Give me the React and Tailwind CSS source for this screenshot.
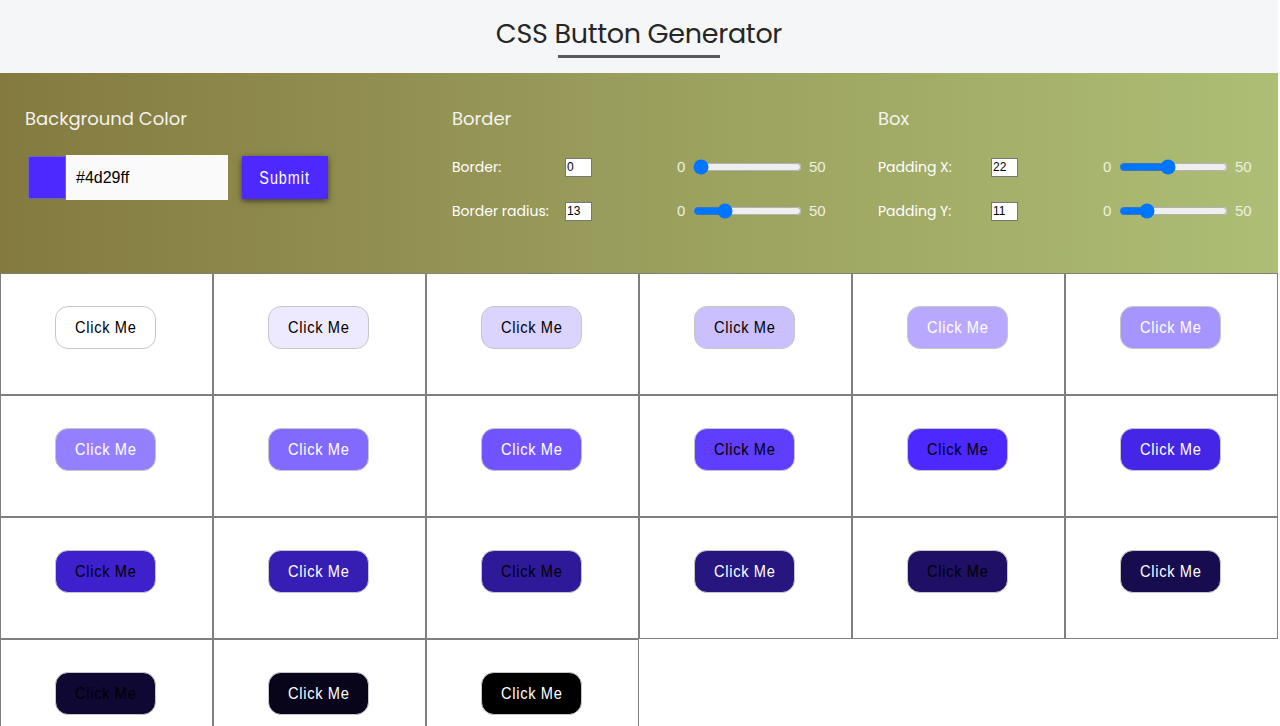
import { useState } from "react";

const colors = [
  ["#ffffff", "#000"], ["#edeaff", "#000"], ["#dbd4ff", "#000"], ["#cabfff", "#000"], ["#b8a9ff", "#fff"], ["#a694ff", "#fff"],
  ["#947fff", "#fff"], ["#8269ff", "#fff"], ["#7154ff", "#fff"], ["#5f3eff", "#000"], ["#4d29ff", "#000"], ["#4525e6", "#fff"],
  ["#3e21cc", "#000"], ["#361db3", "#fff"], ["#2e1999", "#000"], ["#271580", "#fff"], ["#1f1066", "#000"], ["#170c4d", "#fff"],
  ["#0f0833", "#000"], ["#08041a", "#fff"], ["#000000", "#fff"],
];

const poppins = { fontFamily: "Poppins, Inter, 'Noto Sans', sans-serif" };
const arial = { fontFamily: "'Liberation Sans', Arial, sans-serif" };

const SliderRow = ({ label, value, onChange }) => (
  <div className="flex items-center h-[44px] text-[14px] text-white">
    <span className="w-[113px]">{label}</span>
    <input
      type="text"
      value={value}
      onChange={(e) => onChange(Number(e.target.value) || 0)}
      className="w-[27px] h-[19px] bg-white text-black text-[12px] px-[1px] border border-[#777] outline-none"
      style={arial}
    />
    <span className="ml-[85px] w-[16px] text-[15px] text-[#eef0e0]" style={arial}>0</span>
    <input
      type="range"
      min="0"
      max="50"
      value={value}
      onChange={(e) => onChange(Number(e.target.value))}
      className="w-[109px] accent-[#0075ff]"
    />
    <span className="ml-[7px] text-[15px] text-[#eef0e0]" style={arial}>50</span>
  </div>
);

// condensed label: the original renders a narrow face, squeeze Arial to match
const Narrow = ({ children, width, squeeze = "scale-x-[0.8]" }) => (
  <span className="inline-flex justify-center whitespace-nowrap" style={{ width }}>
    <span className={`inline-block shrink-0 ${squeeze}`}>{children}</span>
  </span>
);

export default function App() {
  const [bg, setBg] = useState("#4d29ff");
  const [border, setBorder] = useState(0);
  const [radius, setRadius] = useState(13);
  const [padX, setPadX] = useState(22);
  const [padY, setPadY] = useState(11);

  return (
    <div className="w-[1280px] min-h-[726px] bg-white overflow-hidden">
      <div className="w-[1278px]">
        <header className="h-[73px] bg-[#f5f6f8] flex flex-col items-center pt-[15px]">
          <h1 className="text-[27px] leading-[38px] text-[#262626] tracking-[-0.3px]" style={poppins}>
            CSS Button Generator
          </h1>
          <div className="w-[162px] h-[3px] bg-[#5a5a5a] mt-[2px]" />
        </header>

        <section
          className="h-[200px] grid grid-cols-3 bg-gradient-to-r from-[#847a3f] via-[#9a9e5c] to-[#adbe75]"
          style={poppins}
        >
          <div className="pl-[25px] pt-[32px]">
            <div className="text-[18px] text-[#f3f3f0]">Background Color</div>
            <div className="flex items-center mt-[23px] ml-[3px]">
              <div className="w-[38px] h-[43px] border border-[#6b6bb0]" style={{ background: bg }} />
              <input
                type="text"
                value={bg}
                onChange={(e) => setBg(e.target.value)}
                className="w-[162px] h-[45px] bg-[#fafafa] pl-[10px] text-[16px] text-black outline-none"
                style={arial}
              />
              <button
                className="ml-[14px] w-[86px] h-[43px] bg-[#4d29ff] text-white text-[18px] leading-[20px] tracking-[1.2px] shadow-[0_2px_6px_rgba(0,0,0,0.55)]"
                style={arial}
              >
                <Narrow width={54}>Submit</Narrow>
              </button>
            </div>
          </div>

          <div className="pl-[26px] pt-[32px]">
            <div className="text-[18px] text-[#f3f3f0] mb-[13px]">Border</div>
            <SliderRow label="Border:" value={border} onChange={setBorder} />
            <SliderRow label="Border radius:" value={radius} onChange={setRadius} />
          </div>

          <div className="pl-[26px] pt-[32px]">
            <div className="text-[18px] text-[#f3f3f0] mb-[13px]">Box</div>
            <SliderRow label="Padding X:" value={padX} onChange={setPadX} />
            <SliderRow label="Padding Y:" value={padY} onChange={setPadY} />
          </div>
        </section>

        <div className="grid grid-cols-6">
          {colors.map(([c, t], i) => (
            <div key={i} className="h-[122px] border border-[#7f7f7f] flex justify-center pt-[32px] pr-[2px]">
              <button
                className="h-fit text-[17px] leading-[19px] tracking-[0.8px] border-[#c6c6c6] border"
                style={{
                  background: c,
                  color: t,
                  borderRadius: radius,
                  padding: `${padY}px ${padX}px`,
                  borderWidth: border || 1,
                  ...arial,
                }}
              >
                <Narrow width={55} squeeze="scale-x-[0.86]">Click Me</Narrow>
              </button>
            </div>
          ))}
        </div>
      </div>
    </div>
  );
}
